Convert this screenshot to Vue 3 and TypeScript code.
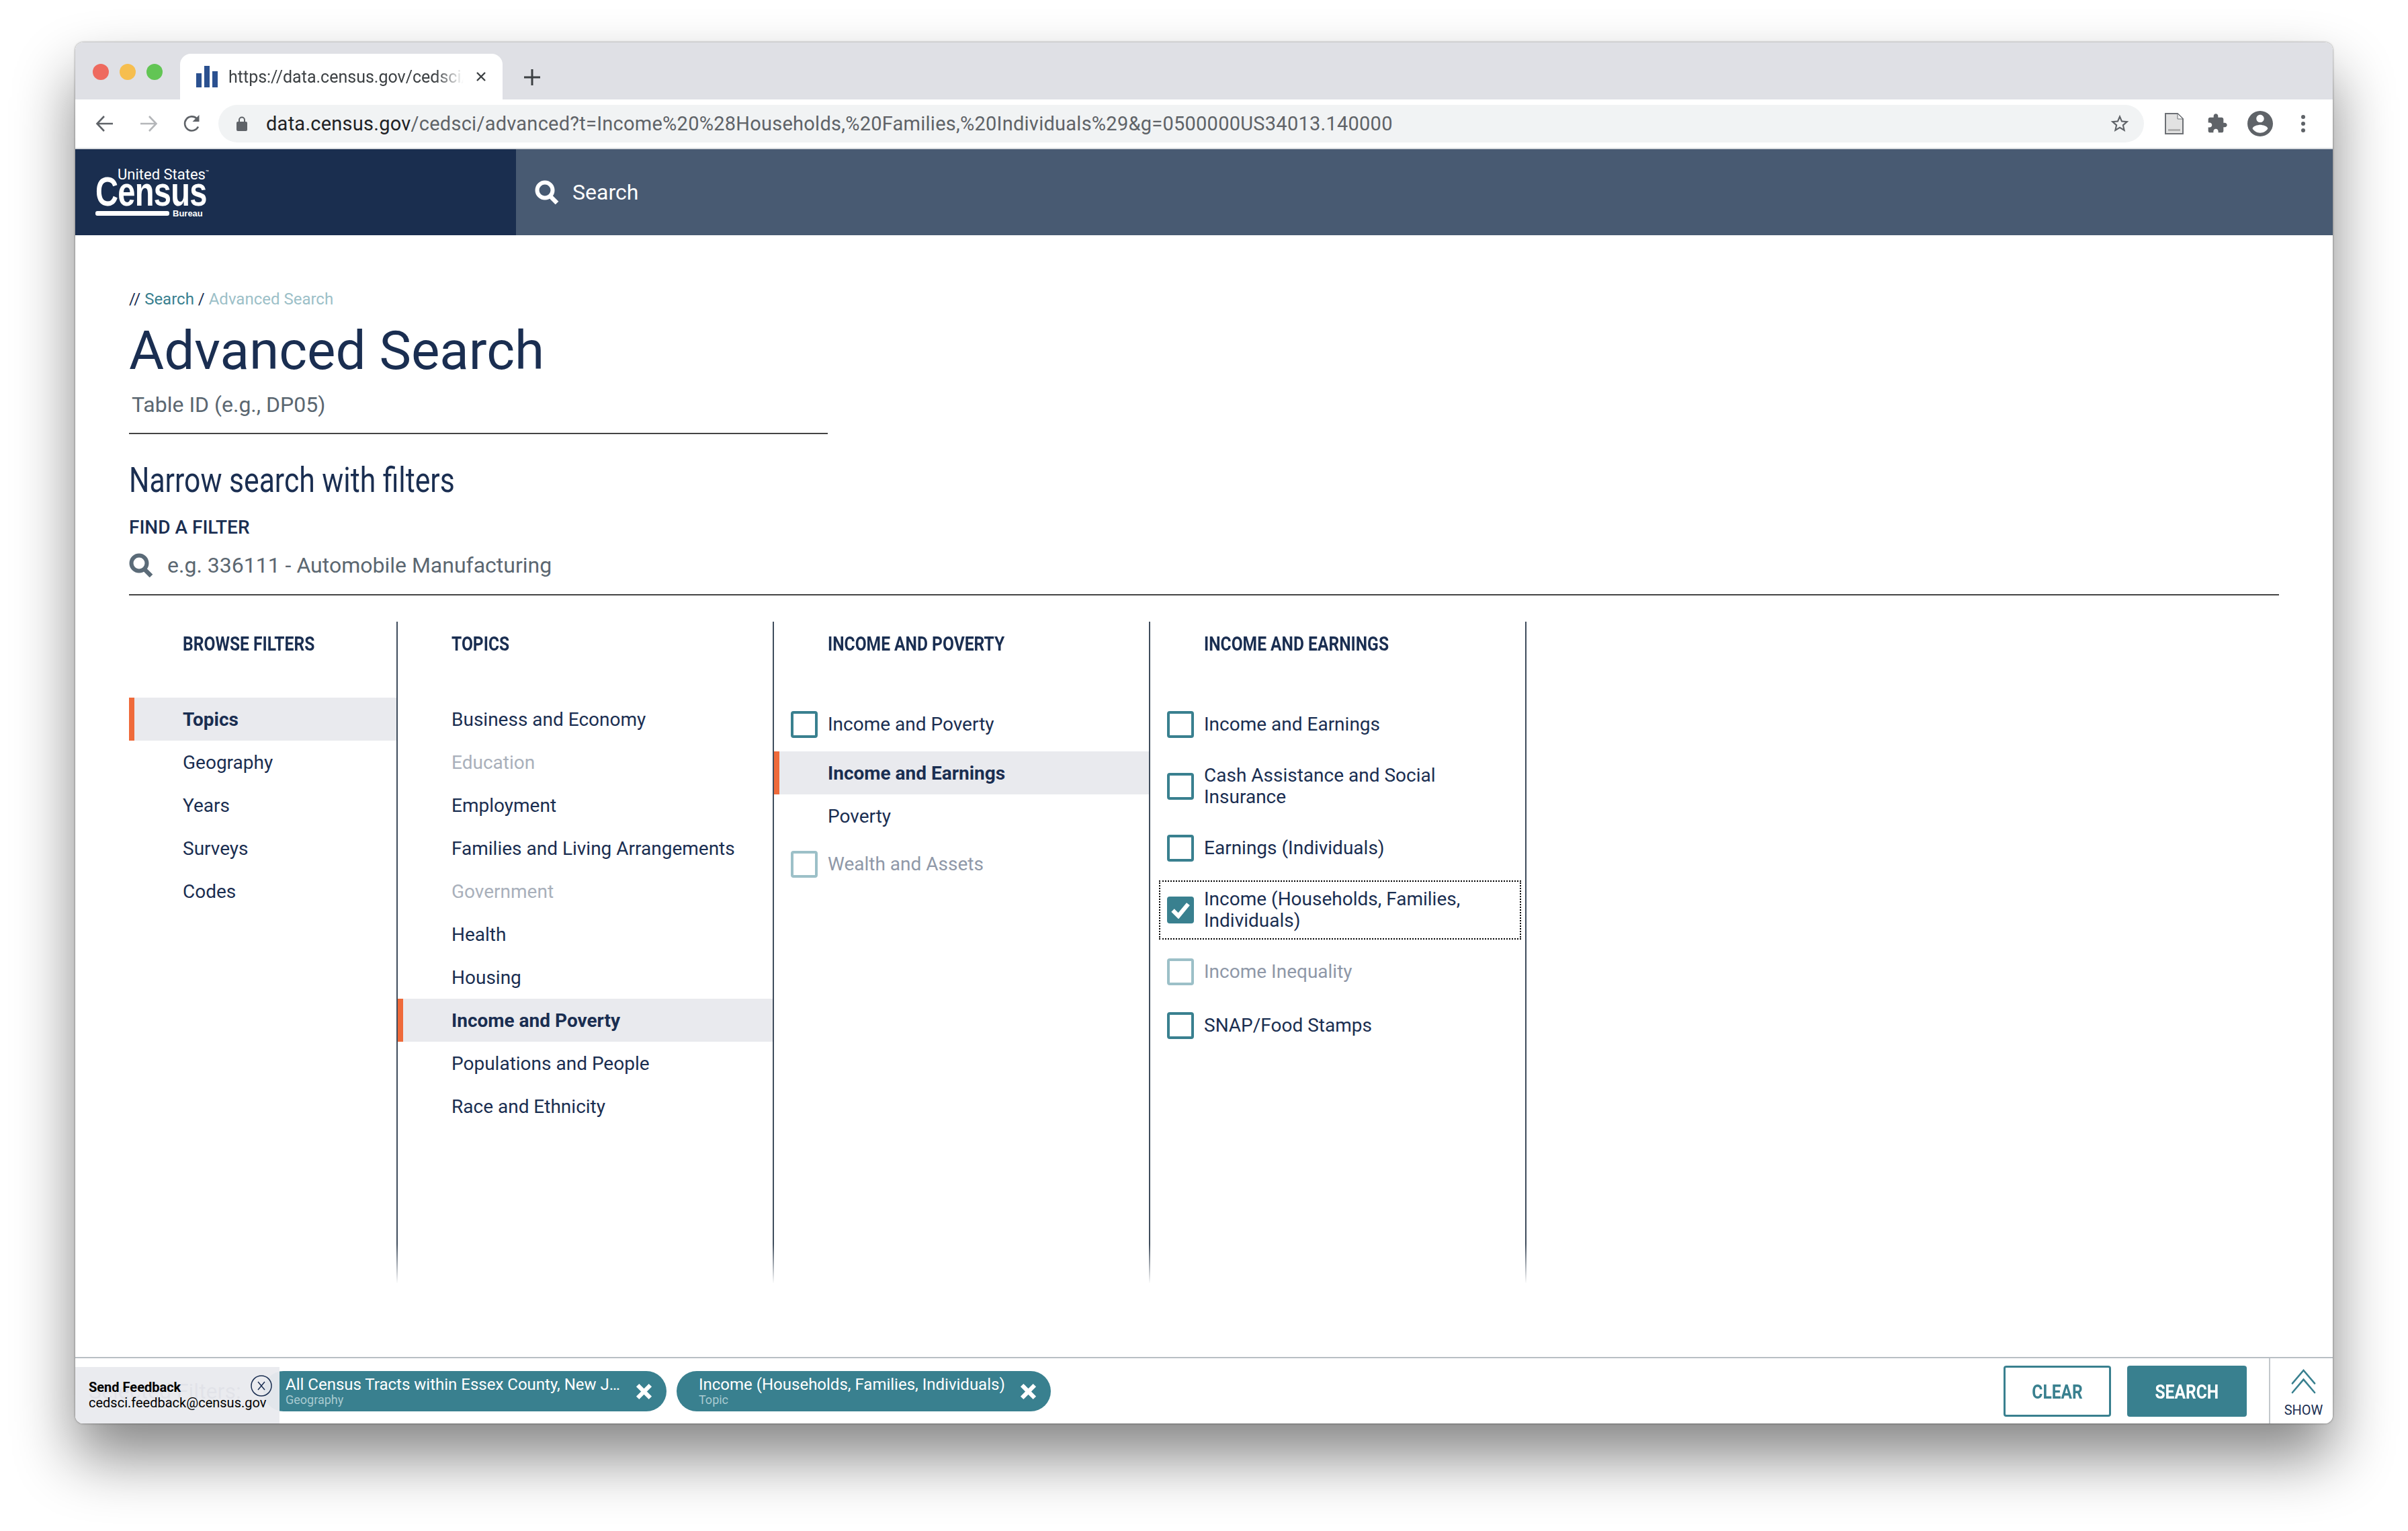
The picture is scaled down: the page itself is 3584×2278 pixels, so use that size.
<template>
  <div class="page">
    <div class="window">
      <div class="tabbar">
        <div class="lights">
          <span class="light red"></span>
          <span class="light yellow"></span>
          <span class="light green"></span>
        </div>
        <div class="tab">
          <svg class="tab-icon" viewBox="0 0 32 32" width="32" height="32">
            <rect x="0" y="11" width="8" height="21" fill="#2b5190" />
            <rect x="12" y="0" width="8" height="32" fill="#2b5190" />
            <rect x="24" y="8" width="8" height="24" fill="#2b5190" />
          </svg>
          <span class="tab-title">https://data.census.gov/cedsci/advanced</span>
          <svg class="tab-close" viewBox="0 0 16 16" width="16" height="16">
            <path d="M2 2l12 12M14 2L2 14" stroke="#3c4043" stroke-width="2.4" fill="none" />
          </svg>
        </div>
        <svg class="new-tab" viewBox="0 0 24 24" width="24" height="24">
          <path d="M12 0v24M0 12h24" stroke="#3c4043" stroke-width="3" fill="none" />
        </svg>
      </div>

      <div class="toolbar">
        <svg class="nav-icon" viewBox="0 0 28 28" width="28" height="28">
          <path d="M26 14H3M13 3L2.5 14 13 25" stroke="#5f6368" stroke-width="2.6" fill="none" />
        </svg>
        <svg class="nav-icon" viewBox="0 0 28 28" width="28" height="28">
          <path d="M2 14h23M15 3l10.5 11L15 25" stroke="#b4b6b9" stroke-width="2.6" fill="none" />
        </svg>
        <svg class="nav-icon" viewBox="0 0 28 28" width="28" height="28">
          <path d="M23 18.5A10.5 10.5 0 1 1 21 6.5" stroke="#5f6368" stroke-width="2.6" fill="none" />
          <path d="M24.5 1v10h-10z" fill="#5f6368" />
        </svg>
        <div class="omnibox">
          <svg class="lock" viewBox="0 0 16 22" width="16" height="22">
            <path d="M4 9V5.5a4 4 0 0 1 8 0V9" stroke="#5f6368" stroke-width="2" fill="none" />
            <rect x="0" y="8" width="16" height="14" rx="2" fill="#5f6368" />
          </svg>
          <span class="url"><span class="host">data.census.gov</span>/cedsci/advanced?t=Income%20%28Households,%20Families,%20Individuals%29&amp;g=0500000US34013.140000</span>
          <svg class="star" viewBox="0 0 24 24" width="32" height="32">
            <path d="M22 9.24l-7.19-.62L12 2 9.19 8.63 2 9.24l5.46 4.73L5.82 21 12 17.27 18.18 21l-1.63-7.03L22 9.24zM12 15.4l-3.76 2.27 1-4.28-3.32-2.88 4.38-.38L12 6.1l1.71 4.04 4.38.38-3.32 2.88 1 4.28L12 15.4z" fill="#5f6368" />
          </svg>
        </div>
        <div class="extensions">
          <svg viewBox="0 0 28 32" width="28" height="32">
            <path d="M1 1h18l8 8v22H1z" fill="#e2e2e2" stroke="#6d7075" stroke-width="2" />
            <path d="M19 1v8h8z" fill="#f6f6f6" stroke="#6d7075" stroke-width="1" />
            <rect x="5" y="24" width="18" height="3" fill="#b0b0b0" />
          </svg>
          <svg viewBox="0 0 24 24" width="32" height="32">
            <path d="M20.5 11H19V7c0-1.1-.9-2-2-2h-4V3.5C13 2.12 11.88 1 10.5 1S8 2.12 8 3.5V5H4c-1.1 0-1.99.9-1.99 2v3.8H3.5c1.49 0 2.7 1.21 2.7 2.7s-1.21 2.7-2.7 2.7H2V20c0 1.1.9 2 2 2h3.8v-1.5c0-1.49 1.21-2.7 2.7-2.7 1.49 0 2.7 1.21 2.7 2.7V22H17c1.1 0 2-.9 2-2v-4h1.5c1.38 0 2.5-1.12 2.5-2.5S21.88 11 20.5 11z" fill="#5f6368" />
          </svg>
          <svg viewBox="2 2 20 20" width="38" height="38">
            <path d="M12 2C6.48 2 2 6.48 2 12s4.48 10 10 10 10-4.48 10-10S17.52 2 12 2zm0 3c1.66 0 3 1.34 3 3s-1.34 3-3 3-3-1.34-3-3 1.34-3 3-3zm0 14.2c-2.5 0-4.71-1.28-6-3.22.03-1.99 4-3.08 6-3.08 1.99 0 5.97 1.09 6 3.08-1.29 1.94-3.5 3.22-6 3.22z" fill="#5f6368" />
          </svg>
          <svg viewBox="0 0 8 28" width="8" height="28">
            <circle cx="4" cy="4" r="3" fill="#5f6368" />
            <circle cx="4" cy="14" r="3" fill="#5f6368" />
            <circle cx="4" cy="24" r="3" fill="#5f6368" />
          </svg>
        </div>
      </div>

      <header class="site-header">
        <div class="brand">
          <div class="logo">
            <span class="logo-us">United States<span class="logo-tm">™</span></span>
            <span class="logo-census">Census</span>
            <div class="logo-foot">
              <span class="logo-bar"></span>
              <span class="logo-bureau">Bureau</span>
            </div>
          </div>
        </div>
        <div class="header-search">
          <svg viewBox="0 0 36 36" width="36" height="36">
            <circle cx="15" cy="15" r="11.5" stroke="#fff" stroke-width="6" fill="none" />
            <path d="M23 24l10 10" stroke="#fff" stroke-width="6.5" fill="none" />
          </svg>
          <span>Search</span>
        </div>
      </header>

      <main class="content">
        <div class="crumbs">
          <span class="sep">// </span><span class="crumb-link">Search</span><span class="sep"> / </span><span class="crumb-now">Advanced Search</span>
        </div>
        <h1 class="title">Advanced Search</h1>
        <div class="table-id">Table ID (e.g., DP05)</div>
        <h2 class="narrow"><span>Narrow search with filters</span></h2>
        <div class="find-label">FIND A FILTER</div>
        <div class="find-input">
          <svg viewBox="0 0 36 36" width="36" height="36">
            <circle cx="15" cy="15" r="11.5" stroke="#5b6b78" stroke-width="6" fill="none" />
            <path d="M23 24l10 10" stroke="#5b6b78" stroke-width="6.5" fill="none" />
          </svg>
          <span>e.g. 336111 - Automobile Manufacturing</span>
        </div>

        <div class="columns">
          <section class="col col-first">
            <h3 class="col-head"><span>BROWSE FILTERS</span></h3>
            <div v-for="item in browse" :key="item.label" class="nav-row" :class="{ active: item.active }">{{ item.label }}</div>
          </section>
          <section class="col">
            <h3 class="col-head"><span>TOPICS</span></h3>
            <div v-for="item in topics" :key="item.label" class="nav-row" :class="{ active: item.active, off: item.off }">{{ item.label }}</div>
          </section>
          <section class="col">
            <h3 class="col-head"><span>INCOME AND POVERTY</span></h3>
            <div class="list-top">
              <label class="check-row spaced"><span class="box"></span>Income and Poverty</label>
              <div class="nav-row active">Income and Earnings</div>
              <div class="nav-row">Poverty</div>
              <label class="check-row off after-nav"><span class="box"></span>Wealth and Assets</label>
            </div>
          </section>
          <section class="col">
            <h3 class="col-head"><span>INCOME AND EARNINGS</span></h3>
            <div class="list-top check-list">
              <label v-for="item in earnings" :key="item.label" class="check-row" :class="{ off: item.off, focused: item.checked }">
                <span class="box" :class="{ checked: item.checked }">
                  <svg v-if="item.checked" viewBox="0 0 28 24" width="30" height="25">
                    <path d="M3 12l8 8L25 3" stroke="#fff" stroke-width="6" fill="none" />
                  </svg>
                </span>
                <span class="check-text">{{ item.label }}</span>
              </label>
            </div>
          </section>
        </div>
      </main>

      <footer class="bottom-bar">
        <div class="feedback">
          <div class="feedback-text">
            <strong>Send Feedback</strong>
            <span>cedsci.feedback@census.gov</span>
          </div>
          <svg class="feedback-close" viewBox="0 0 32 32" width="32" height="32">
            <circle cx="16" cy="16" r="15" stroke="#1a2e51" stroke-width="1.5" fill="none" />
            <path d="M11 10l10 12M21 10L11 22" stroke="#1a2e51" stroke-width="1.5" fill="none" />
          </svg>
        </div>
        <div class="selected">
          <span class="selected-label">Selected Filters:</span>
          <div v-for="chip in chips" :key="chip.sub" class="chip" :class="chip.cls">
            <div class="chip-text">
              <div class="chip-main">{{ chip.main }}</div>
              <div class="chip-sub">{{ chip.sub }}</div>
            </div>
            <svg viewBox="0 0 24 24" width="25" height="25">
              <path d="M3 3l18 18M21 3L3 21" stroke="#fff" stroke-width="6" fill="none" />
            </svg>
          </div>
        </div>
        <div class="actions">
          <button class="btn btn-clear"><span>CLEAR</span></button>
          <button class="btn btn-search"><span>SEARCH</span></button>
        </div>
        <div class="show">
          <svg viewBox="0 0 38 38" width="37" height="37">
            <path d="M2 22L19 2l17 20M2 36l17-20 17 20" stroke="#39808f" stroke-width="2.6" fill="none" stroke-linecap="round" />
          </svg>
          <span>SHOW</span>
        </div>
      </footer>
    </div>
  </div>
</template>

<script setup lang="ts">
interface NavItem {
  label: string
  active?: boolean
  off?: boolean
}

interface CheckItem {
  label: string
  off?: boolean
  checked?: boolean
}

const browse: NavItem[] = [
  { label: 'Topics', active: true },
  { label: 'Geography' },
  { label: 'Years' },
  { label: 'Surveys' },
  { label: 'Codes' },
]

const topics: NavItem[] = [
  { label: 'Business and Economy' },
  { label: 'Education', off: true },
  { label: 'Employment' },
  { label: 'Families and Living Arrangements' },
  { label: 'Government', off: true },
  { label: 'Health' },
  { label: 'Housing' },
  { label: 'Income and Poverty', active: true },
  { label: 'Populations and People' },
  { label: 'Race and Ethnicity' },
]

const earnings: CheckItem[] = [
  { label: 'Income and Earnings' },
  { label: 'Cash Assistance and Social Insurance' },
  { label: 'Earnings (Individuals)' },
  { label: 'Income (Households, Families, Individuals)', checked: true },
  { label: 'Income Inequality', off: true },
  { label: 'SNAP/Food Stamps' },
]

const chips = [
  { main: 'All Census Tracts within Essex County, New Jersey', sub: 'Geography', cls: 'chip-geo' },
  { main: 'Income (Households, Families, Individuals)', sub: 'Topic', cls: 'chip-topic' },
]
</script>

<style>
html,
body {
  margin: 0;
  background: #fff;
  overflow: hidden;
}
</style>

<style scoped>
.page {
  width: 3584px;
  height: 2278px;
  padding: 63px 112px 0;
  box-sizing: border-box;
  background: #fff;
  font-family: Roboto, "Liberation Sans", sans-serif;
  color: #1a2e51;
}

.window {
  position: relative;
  width: 3360px;
  height: 2055px;
  display: flex;
  flex-direction: column;
  background: #fff;
  border-radius: 12px;
  overflow: hidden;
}

.page::before {
  content: "";
  position: absolute;
  left: 112px;
  top: 63px;
  width: 3360px;
  height: 2055px;
  border-radius: 12px;
  box-shadow: 0 0 3px rgba(0, 0, 0, 0.5), 0 50px 90px rgba(0, 0, 0, 0.48);
}

.tabbar {
  height: 85px;
  flex: none;
  display: flex;
  background: #dfe0e5;
  box-sizing: border-box;
  padding-top: 17px;
}

.lights {
  width: 156px;
  flex: none;
  display: flex;
  gap: 16px;
  padding: 15px 0 0 26px;
  box-sizing: border-box;
}

.light {
  width: 24px;
  height: 24px;
  border-radius: 50%;
}

.red { background: #ee6a5f; }
.yellow { background: #f6be4f; }
.green { background: #62c554; }

.tab {
  width: 480px;
  height: 68px;
  flex: none;
  display: flex;
  align-items: center;
  box-sizing: border-box;
  padding: 0 24px;
  background: #fff;
  border-radius: 16px 16px 0 0;
}

.tab-icon {
  flex: none;
}

.tab-title {
  width: 350px;
  margin-left: 16px;
  flex: none;
  overflow: hidden;
  white-space: nowrap;
  font-size: 25px;
  color: #3c4043;
  -webkit-mask-image: linear-gradient(to right, #000 88%, transparent);
  mask-image: linear-gradient(to right, #000 88%, transparent);
}

.tab-close {
  margin-left: 18px;
  flex: none;
}

.new-tab {
  margin: 23px 0 0 32px;
}

.toolbar {
  height: 74px;
  flex: none;
  display: flex;
  align-items: center;
  box-sizing: border-box;
  border-bottom: 2px solid #dadce0;
  padding: 0 0 0 30px;
  gap: 37px;
}

.omnibox {
  flex: 1 1 auto;
  height: 56px;
  display: flex;
  align-items: center;
  box-sizing: border-box;
  padding: 0 20px 0 27px;
  margin-left: -12px;
  background: #f1f3f4;
  border-radius: 28px;
}

.lock {
  flex: none;
}

.url {
  margin-left: 28px;
  font-size: 29px;
  letter-spacing: 0.25px;
  color: #5f6368;
  white-space: nowrap;
  flex: 1;
}

.host {
  color: #202124;
}

.extensions {
  flex: none;
  width: 268px;
  display: grid;
  grid-template-columns: repeat(4, 64px);
  align-items: center;
  justify-items: center;
  box-sizing: border-box;
  padding-right: 12px;
  margin-left: -24px;
}

.site-header {
  height: 128px;
  flex: none;
  display: flex;
}

.brand {
  width: 656px;
  flex: none;
  background: #1a2e4f;
  display: flex;
  align-items: center;
  box-sizing: border-box;
  padding-left: 30px;
}

.logo {
  width: 166px;
  display: flex;
  flex-direction: column;
  color: #fff;
  font-family: "Liberation Sans", sans-serif;
}

.logo-us {
  font-family: Roboto, sans-serif;
  font-size: 22px;
  line-height: 16px;
  height: 14px;
  white-space: nowrap;
  margin-left: 33px;
}

.logo-tm {
  font-size: 8px;
  vertical-align: 8px;
}

.logo-census {
  font-size: 62px;
  line-height: 44px;
  height: 46px;
  font-weight: 700;
  white-space: nowrap;
  transform: scaleX(0.76);
  transform-origin: left;
  letter-spacing: -1px;
}

.logo-foot {
  display: flex;
  align-items: center;
  gap: 5px;
  height: 12px;
  margin-top: 3px;
}

.logo-bar {
  width: 110px;
  height: 7px;
  background: #fff;
  border-radius: 3px;
}

.logo-bureau {
  font-size: 13px;
  line-height: 12px;
  font-weight: 700;
  white-space: nowrap;
}

.header-search {
  flex: 1;
  display: flex;
  align-items: center;
  gap: 20px;
  padding-left: 28px;
  background: #485a72;
  color: #fff;
  font-size: 32px;
}

.content {
  flex: 1;
  min-height: 0;
  box-sizing: border-box;
  padding: 0 80px;
}

.crumbs {
  margin-top: 81px;
  height: 28px;
  line-height: 28px;
  font-size: 24px;
  white-space: pre;
  color: #1a2e51;
}

.crumb-link { color: #39808f; }
.crumb-now { color: #9cc0c8; }

.title {
  margin: 19px 0 0;
  height: 88px;
  line-height: 88px;
  font-size: 80px;
  font-weight: 400;
  color: #1a2e51;
}

.table-id {
  width: 1040px;
  box-sizing: border-box;
  height: 69px;
  padding: 0 0 0 4px;
  margin-top: 11px;
  line-height: 50px;
  font-size: 32px;
  color: #5b6771;
  border-bottom: 2px solid #444;
}

.narrow {
  margin: 41px 0 0;
  height: 56px;
  line-height: 56px;
  font-size: 52px;
  font-weight: 400;
  color: #1a2e51;
  white-space: nowrap;
}

.narrow span {
  display: inline-block;
  transform: scaleX(0.82);
  transform-origin: left;
}

.find-label {
  margin-top: 26px;
  height: 32px;
  line-height: 32px;
  font-size: 28px;
  font-weight: 500;
  color: #1a2e51;
}

.find-input {
  margin-top: 6px;
  height: 79px;
  display: flex;
  align-items: center;
  gap: 21px;
  box-sizing: border-box;
  padding-bottom: 10px;
  border-bottom: 2px solid #444;
  font-size: 32px;
  color: #5b6771;
}

.columns {
  margin-top: 39px;
  height: 984px;
  display: flex;
}

.col {
  width: 560px;
  flex: none;
  box-sizing: border-box;
  border-right: 2px solid;
  border-image: linear-gradient(to bottom, #3f4c5c 0, #3f4c5c 94%, transparent 100%) 1;
}

.col-first {
  width: 400px;
}

.col-head {
  height: 113px;
  margin: 0;
  padding: 18px 0 0 80px;
  box-sizing: border-box;
  font-size: 30px;
  line-height: 30px;
  font-weight: 700;
  color: #1a2e51;
  white-space: nowrap;
}

.col-head span {
  display: inline-block;
  transform: scaleX(0.82);
  transform-origin: left;
}

.nav-row {
  height: 64px;
  box-sizing: border-box;
  display: flex;
  align-items: center;
  padding-left: 80px;
  font-size: 28px;
  color: #1a2e51;
}

.nav-row.active {
  font-weight: 700;
  background: #e9eaee;
  border-left: 8px solid #ef6a3a;
  padding-left: 72px;
}

.nav-row.off {
  color: #a9b0bb;
}

.list-top {
  padding-top: 20px;
}

.check-list {
  display: flex;
  flex-direction: column;
  gap: 40px;
}

.check-row {
  display: flex;
  align-items: center;
  gap: 15px;
  min-height: 40px;
  width: 515px;
  margin-left: 25px;
  font-size: 28px;
  line-height: 32px;
  color: #1a2e51;
}

.check-row.spaced {
  margin-bottom: 20px;
}

.check-row.after-nav {
  margin-top: 20px;
}

.check-row.off {
  color: #8f98a8;
}

.check-row.focused {
  outline: 2px dotted #000;
  outline-offset: 10px;
}

.box {
  width: 40px;
  height: 40px;
  flex: none;
  box-sizing: border-box;
  border: 4px solid #39808f;
  border-radius: 4px;
  background: #fff;
  display: flex;
  align-items: center;
  justify-content: center;
}

.check-row.off .box {
  border-color: #9cc0c8;
}

.box.checked {
  background: #39808f;
}

.bottom-bar {
  position: relative;
  height: 99px;
  flex: none;
  display: flex;
  box-sizing: border-box;
  border-top: 2px solid #b8bfc4;
}

.feedback {
  position: absolute;
  left: 0;
  bottom: 0;
  z-index: 2;
  width: 304px;
  height: 84px;
  box-sizing: border-box;
  padding: 0 0 0 20px;
  background: rgba(233, 234, 238, 0.96);
  display: flex;
  align-items: center;
}

.feedback-text {
  display: flex;
  flex-direction: column;
  font-size: 20px;
  line-height: 23px;
  color: #000;
  white-space: nowrap;
}

.feedback-text strong {
  font-size: 20px;
}

.feedback-close {
  position: absolute;
  left: 261px;
  top: 12px;
}

.selected {
  flex: 1;
  display: flex;
  align-items: center;
  gap: 15px;
  padding: 0 0 0 20px;
}

.selected-label {
  width: 245px;
  font-size: 32px;
  color: #1a2e51;
  white-space: nowrap;
}

.chip {
  height: 60px;
  box-sizing: border-box;
  display: flex;
  align-items: center;
  justify-content: space-between;
  padding: 0 21px 0 33px;
  border-radius: 30px;
  background: #39808f;
  color: #fff;
  position: relative;
  top: 0.5px;
}

.chip-geo { width: 600px; }
.chip-topic { width: 557px; }

.chip-text {
  min-width: 0;
  width: 498px;
}

.chip-topic .chip-text {
  width: 466px;
}

.chip-main {
  font-size: 24px;
  line-height: 26px;
  white-space: nowrap;
  overflow: hidden;
  text-overflow: ellipsis;
}

.chip-sub {
  font-size: 18px;
  line-height: 20px;
  color: #a9cbd1;
}

.actions {
  flex: none;
  display: flex;
  align-items: flex-start;
  gap: 24px;
  padding: 11px 33px 0 0;
}

.btn {
  height: 76px;
  border-radius: 4px;
  font-family: inherit;
  font-size: 30px;
  font-weight: 700;
  box-sizing: border-box;
  padding: 0;
}

.btn span {
  display: inline-block;
  transform: scaleX(0.82);
}

.btn-clear {
  width: 160px;
  border: 3px solid #39808f;
  background: #fff;
  color: #39808f;
}

.btn-search {
  width: 178px;
  border: none;
  background: #39808f;
  color: #fff;
}

.show {
  width: 95px;
  flex: none;
  box-sizing: border-box;
  border-left: 2px solid #c3c8cc;
  display: flex;
  flex-direction: column;
  align-items: center;
  padding: 16px 0 0 6px;
  font-size: 20px;
  line-height: 24px;
  color: #1a2e51;
  gap: 12px;
}
</style>
